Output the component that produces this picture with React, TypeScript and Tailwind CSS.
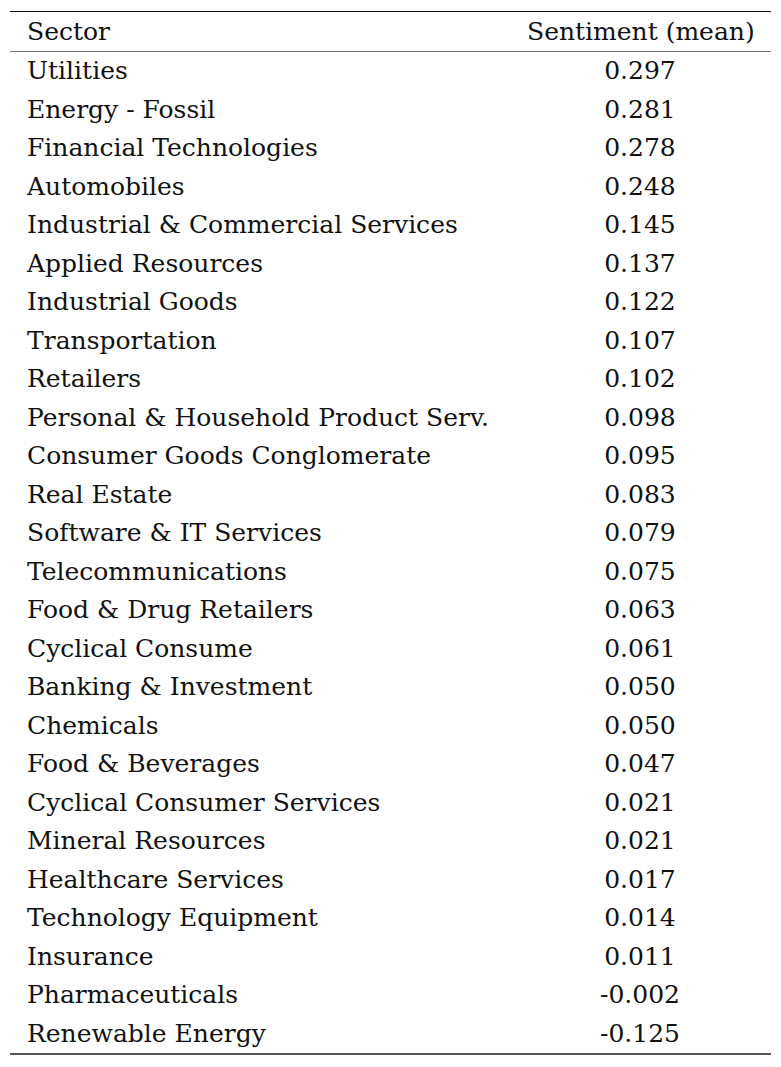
import React from 'react';

const rows: [string, string][] = [
  ['Utilities', '0.297'],
  ['Energy - Fossil', '0.281'],
  ['Financial Technologies', '0.278'],
  ['Automobiles', '0.248'],
  ['Industrial & Commercial Services', '0.145'],
  ['Applied Resources', '0.137'],
  ['Industrial Goods', '0.122'],
  ['Transportation', '0.107'],
  ['Retailers', '0.102'],
  ['Personal & Household Product Serv.', '0.098'],
  ['Consumer Goods Conglomerate', '0.095'],
  ['Real Estate', '0.083'],
  ['Software & IT Services', '0.079'],
  ['Telecommunications', '0.075'],
  ['Food & Drug Retailers', '0.063'],
  ['Cyclical Consume', '0.061'],
  ['Banking & Investment', '0.050'],
  ['Chemicals', '0.050'],
  ['Food & Beverages', '0.047'],
  ['Cyclical Consumer Services', '0.021'],
  ['Mineral Resources', '0.021'],
  ['Healthcare Services', '0.017'],
  ['Technology Equipment', '0.014'],
  ['Insurance', '0.011'],
  ['Pharmaceuticals', '-0.002'],
  ['Renewable Energy', '-0.125'],
];

export default function App() {
  return (
    <div className="w-[781px] h-[1067px] bg-white pt-[11px] pl-[10px] text-[#111] font-['DejaVu_Serif',serif] text-[25px]">
      <div className="w-[761px]">
        <div className="h-px bg-[#111]" />
        <div className="flex h-[38.5px] items-center leading-none">
          <div className="flex-1 pl-[17px]">Sector</div>
          <div className="w-[262px] px-[18px] text-center whitespace-nowrap">Sentiment (mean)</div>
        </div>
        <div className="h-px bg-[#777]" />
        {rows.map(([name, value]) => (
          <div key={name} className="flex h-[38.5px] items-center leading-none">
            <div className="flex-1 pl-[17px] whitespace-nowrap">{name}</div>
            <div className="w-[262px] px-[18px] text-center">{value}</div>
          </div>
        ))}
        <div className="h-[2px] bg-[#555]" />
      </div>
    </div>
  );
}
